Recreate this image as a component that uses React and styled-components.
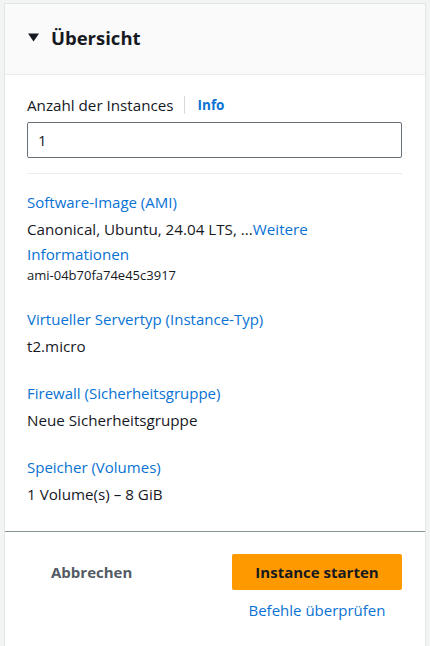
import React from "react";
import styled, { createGlobalStyle } from "styled-components";

const Global = createGlobalStyle`
  html, body { margin: 0; padding: 0; background: #f2f3f3; }
  * { box-sizing: border-box; }
  body { font-family: "Open Sans", "Noto Sans", Arial, sans-serif; color: #16191f; }
`;

const Page = styled.div`
  height: 646px;
  padding: 3px 4px 0 4px;
  display: flex;
`;

const Frame = styled.div`
  flex: 1;
  display: flex;
  flex-direction: column;
  background: #fff;
  border: 1px solid #e3e6e6;
  border-bottom: none;
`;

const Header = styled.div`
  height: 71px;
  display: flex;
  align-items: center;
  gap: 12px;
  padding-left: 23px;
  padding-bottom: 3px;
  background: #fafafa;
  border-bottom: 1px solid #eaeded;
`;

const Title = styled.h2`
  margin: 0;
  font-size: 18.5px;
  font-weight: 700;
  line-height: 26px;
  color: #16191f;
`;

const Body = styled.div`
  flex: 1;
  padding: 19px 23px 0 22px;
  display: flex;
  flex-direction: column;
`;

const LabelRow = styled.div`
  display: flex;
  align-items: center;
  height: 22px;
  font-size: 15.2px;
  color: #16191f;
`;

const Sep = styled.span`
  width: 1px;
  height: 18px;
  background: #d5dbdb;
  margin: 0 13px 0 10px;
`;

const InfoLink = styled.a`
  font-size: 13.5px;
  font-weight: 700;
  color: #0972d3;
  text-decoration: none;
`;

const Input = styled.div`
  margin-top: 6px;
  height: 36px;
  border: 1px solid #687078;
  border-radius: 2px;
  display: flex;
  align-items: center;
  padding-left: 10px;
  font-size: 15px;
`;

const Divider = styled.div`
  margin-top: 15px;
  height: 1px;
  background: #eaeded;
`;

const Section = styled.div`
  margin-top: ${(p) => p.$top}px;
  display: flex;
  flex-direction: column;
`;

const Key = styled.div`
  font-size: 15px;
  line-height: 22px;
  color: #0972d3;
`;

const Value = styled.div`
  margin-top: 4px;
  font-size: 15.2px;
  line-height: 25px;
  color: #16191f;
`;

const Link = styled.a`
  color: #0972d3;
  text-decoration: none;
`;

const Small = styled.div`
  font-size: 13px;
  line-height: 16px;
  color: #16191f;
`;

const Footer = styled.div`
  height: 115px;
  border-top: 1px solid #879596;
  display: grid;
  grid-template-columns: 1fr 170px;
  padding: 22px 23px 0 46px;
  align-items: start;
`;

const Cancel = styled.button`
  justify-self: start;
  height: 36px;
  border: none;
  background: none;
  font-family: inherit;
  font-size: 15px;
  font-weight: 700;
  color: #545b64;
  padding: 0;
`;

const Actions = styled.div`
  display: flex;
  flex-direction: column;
  align-items: center;
  gap: 10px;
`;

const Primary = styled.button`
  width: 170px;
  height: 36px;
  border: none;
  border-radius: 2px;
  background: #ff9900;
  font-family: inherit;
  font-size: 15px;
  font-weight: 700;
  color: #16191f;
`;

const SubLink = styled.a`
  font-size: 15px;
  color: #0972d3;
  text-decoration: none;
`;

const Caret = () => (
  <svg width="11" height="9" viewBox="0 0 11 9">
    <path d="M0 0.5 H11 L5.5 8.5 Z" fill="#16191f" />
  </svg>
);

export default function App() {
  return (
    <>
      <Global />
      <Page>
        <Frame>
          <Header>
            <Caret />
            <Title>Übersicht</Title>
          </Header>
          <Body>
            <LabelRow>
              Anzahl der Instances
              <Sep />
              <InfoLink href="#">Info</InfoLink>
            </LabelRow>
            <Input>1</Input>
            <Divider />
            <Section $top={17}>
              <Key>Software-Image (AMI)</Key>
              <Value>
                Canonical, Ubuntu, 24.04 LTS, ...<Link href="#">Weitere Informationen</Link>
              </Value>
              <Small>ami-04b70fa74e45c3917</Small>
            </Section>
            <Section $top={25}>
              <Key>Virtueller Servertyp (Instance-Typ)</Key>
              <Value>t2.micro</Value>
            </Section>
            <Section $top={23}>
              <Key>Firewall (Sicherheitsgruppe)</Key>
              <Value>Neue Sicherheitsgruppe</Value>
            </Section>
            <Section $top={23}>
              <Key>Speicher (Volumes)</Key>
              <Value>1 Volume(s) – 8 GiB</Value>
            </Section>
          </Body>
          <Footer>
            <Cancel>Abbrechen</Cancel>
            <Actions>
              <Primary>Instance starten</Primary>
              <SubLink href="#">Befehle überprüfen</SubLink>
            </Actions>
          </Footer>
        </Frame>
      </Page>
    </>
  );
}
